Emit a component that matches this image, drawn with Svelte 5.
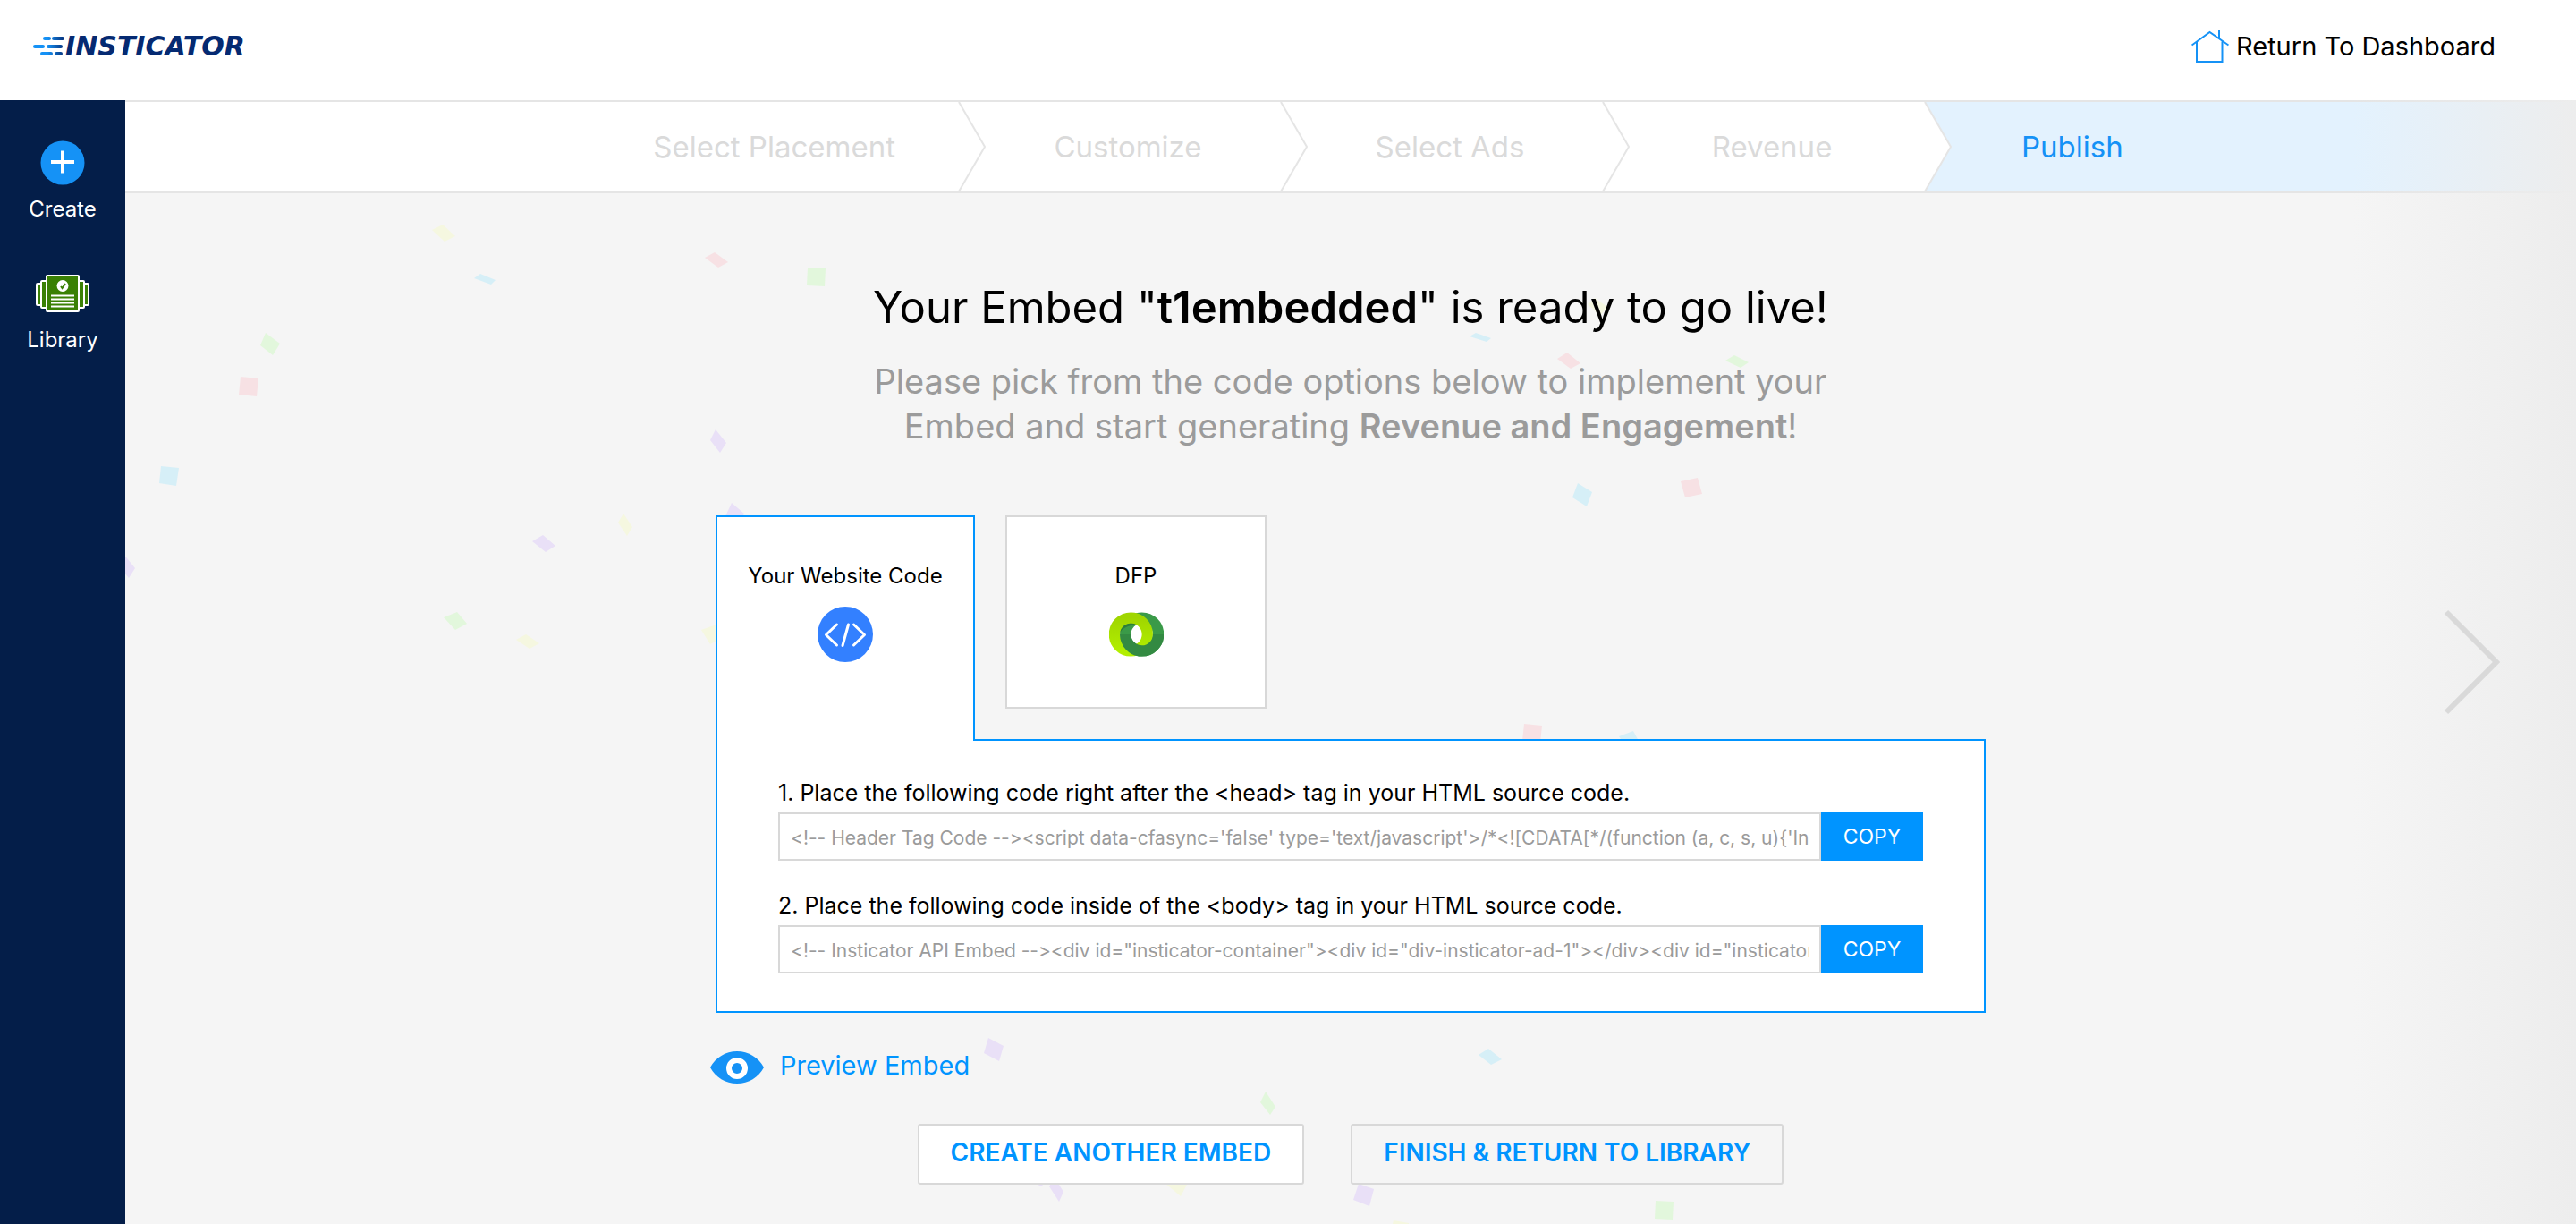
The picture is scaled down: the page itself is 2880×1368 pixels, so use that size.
<script>
  const steps = ['Select Placement', 'Customize', 'Select Ads', 'Revenue', 'Publish'];
  const current = 'Publish';

  const fields = [
    {
      id: 'head-code',
      label: '1. Place the following code right after the <head> tag in your HTML source code.',
      value: "<!-- Header Tag Code --><script data-cfasync='false' type='text/javascript'>/*<![CDATA[*/(function (a, c, s, u){'Insticator'"
    },
    {
      id: 'body-code',
      label: '2. Place the following code inside of the <body> tag in your HTML source code.',
      value: '<!-- Insticator API Embed --><div id="insticator-container"><div id="div-insticator-ad-1"></div><div id="insticator-embed">'
    }
  ];

  const colors = { y: '#f5f7e0', b: '#d6eff7', p: '#f7e1e4', g: '#e2f7dc', v: '#e9e0f7' };
  const confetti = [
    ['y', '483,257 495,251 509,264 497,270'],
    ['b', '530,311 537,306 554,313 549,318'],
    ['p', '788,288 799,282 814,293 803,299'],
    ['g', '903,299 923,300 922,320 902,319'],
    ['g', '297,372 313,384 305,397 291,386'],
    ['p', '269,421 289,423 287,443 267,441'],
    ['v', '800,480 812,495 805,506 794,492'],
    ['b', '180,521 200,523 197,543 178,540'],
    ['v', '818,562 832,574 826,588 811,577'],
    ['y', '697,574 707,589 701,599 691,584'],
    ['v', '595,605 607,598 621,610 610,617'],
    ['v', '138,619 151,635 144,646 132,632'],
    ['g', '496,690 511,684 522,697 509,704'],
    ['y', '577,715 588,709 603,719 592,725'],
    ['y', '784,704 801,698 809,712 794,720'],
    ['b', '1643,376 1650,372 1667,378 1662,382'],
    ['p', '1741,401 1752,394 1767,406 1756,412'],
    ['b', '1758,556 1764,540 1780,550 1774,566'],
    ['p', '1879,538 1898,534 1903,552 1884,556'],
    ['g', '1929,403 1939,397 1955,405 1946,411'],
    ['y', '1775,340 1783,333 1797,343 1789,353'],
    ['p', '1704,809 1724,811 1722,830 1702,828'],
    ['b', '1810,823 1826,817 1833,830 1820,838'],
    ['b', '1653,1179 1664,1172 1679,1184 1667,1190'],
    ['v', '1105,1160 1122,1169 1117,1186 1100,1177'],
    ['g', '1415,1220 1426,1237 1420,1246 1409,1232'],
    ['v', '1179,1316 1189,1332 1184,1343 1173,1326'],
    ['v', '1150,1320 1168,1318 1165,1326'],
    ['y', '1302,1322 1328,1322 1320,1337'],
    ['v', '1519,1323 1536,1329 1531,1348 1513,1341'],
    ['g', '1851,1342 1871,1343 1870,1363 1850,1362'],
    ['y', '1558,1364 1575,1367 1574,1372 1556,1372']
  ];
</script>

{#snippet codeIcon()}
  <svg width="62" height="62" viewBox="0 0 62 62" aria-hidden="true">
    <circle cx="31" cy="31" r="31" fill="#3380ff" />
    <path d="M21.500 20 9.500 31.500 21.500 43M40.500 20 52.500 31.500 40.500 43M34.500 20 28 43.500" fill="none" stroke="#fff" stroke-width="3" stroke-linecap="round" stroke-linejoin="round" />
  </svg>
{/snippet}

{#snippet dfpIcon()}
  <svg width="61" height="62" viewBox="0 0 62 62" aria-hidden="true">
    <defs>
      <linearGradient id="lime" x1="0" y1="0" x2="0" y2="1">
        <stop offset="0" stop-color="#a0d600" />
        <stop offset="1" stop-color="#b2ee00" />
      </linearGradient>
      <clipPath id="lower"><rect x="0" y="31" width="62" height="31" /></clipPath>
    </defs>
    <circle cx="37.250" cy="31" r="18.750" fill="none" stroke="#3a9a48" stroke-width="12.500" />
    <circle cx="24.750" cy="31" r="18.750" fill="none" stroke="url(#lime)" stroke-width="12.500" />
    <circle cx="37.250" cy="31" r="18.750" fill="none" stroke="#338a42" stroke-width="12.500" clip-path="url(#lower)" />
    <path d="M12.200 31A12.500 12.500 0 0 1 24.700 18.500C27 18.500 29 19 31 20C28 20 26 20 24 21C17 23 13 26 12.200 31Z" fill="#2d7d3a" />
  </svg>
{/snippet}

<div class="page">
  <header>
    <a class="logo" href="#home">
      <svg width="36" height="22" viewBox="0 0 36 22" aria-hidden="true">
        <defs>
          <linearGradient id="trail" gradientUnits="userSpaceOnUse" x1="16" y1="0" x2="36" y2="0">
            <stop offset="0" stop-color="#1592f6" />
            <stop offset="1" stop-color="#052a72" />
          </linearGradient>
        </defs>
        <g fill="url(#trail)">
          <rect x="11" y="0" width="9" height="4" rx="2" />
          <rect x="21" y="0" width="14" height="4" rx="2" />
          <rect x="0" y="9" width="13" height="4" rx="2" />
          <rect x="15" y="9" width="18" height="4" rx="2" />
          <rect x="8" y="17" width="14" height="4" rx="2" />
          <rect x="24" y="17" width="9" height="4" rx="2" />
        </g>
      </svg>
      <span>INSTICATOR</span>
    </a>
    <a class="dashboard" href="#dashboard">
      <svg width="42" height="38" viewBox="0 0 42 38" fill="none" stroke="#1592f6" stroke-width="2" aria-hidden="true">
        <path d="M0.500 17.500 20.500 3 41.500 17.500M6 13.500V36H34.500V13.500M31 1V10" />
      </svg>
      <span>Return To Dashboard</span>
    </a>
  </header>

  <div class="body">
    <nav class="sidebar" aria-label="Main">
      <a href="#create">
        <span class="glyph">
          <svg width="50" height="50" viewBox="0 0 50 50" aria-hidden="true">
            <circle cx="25" cy="25" r="24.500" fill="#1592f6" />
            <path d="M12 24H38M25 11.500V36.500" stroke="#fff" stroke-width="4" />
          </svg>
        </span>
        Create
      </a>
      <a href="#library">
        <span class="glyph">
          <svg width="60" height="44" viewBox="0 0 60 44" aria-hidden="true">
            <g fill="#3a8004" stroke="#fff" stroke-width="2" stroke-linejoin="round">
              <rect x="1" y="11" width="58" height="24" rx="1" />
              <rect x="6" y="8" width="48" height="30" rx="1" />
              <rect x="12" y="2" width="36" height="40" rx="1" />
            </g>
            <circle cx="30" cy="13.500" r="6.500" fill="#fff" />
            <path d="M28 14 29.500 16 33 11" fill="none" stroke="#3a8004" stroke-width="2" />
            <path d="M17 24.500H43M17 28.500H43M17 32.500H43M17 36.500H43" stroke="#fff" stroke-width="2" />
          </svg>
        </span>
        Library
      </a>
    </nav>

    <div class="workspace">
      <svg class="confetti" viewBox="140 112 2740 1256" preserveAspectRatio="xMidYMin slice" aria-hidden="true">
        {#each confetti as [tone, points]}
          <polygon {points} fill={colors[tone]} />
        {/each}
      </svg>

      <ol class="steps">
        {#each steps as step, i}
          <li class:current={step === current}>
            {#if i > 0}
              <svg width="32" height="100" viewBox="0 0 32 100" aria-hidden="true">
                <path d="M0 0H1L30 50 1 100H0Z" fill="#fff" />
                <path d="M1 0 30 50 1 100" fill="none" stroke="#e5e5e5" stroke-width="2" />
              </svg>
            {/if}
            <a href="#step-{i + 1}">{step}</a>
          </li>
        {/each}
      </ol>

      <main>
        <h1>Your Embed "<strong>t1embedded</strong>" is ready to go live!</h1>
        <p class="lead">
          Please pick from the code options below to implement your<br />
          Embed and start generating <strong>Revenue and Engagement</strong>!
        </p>

        <div class="tabs" role="tablist">
          <button class="tab active" role="tab" aria-selected="true">
            <span>Your Website Code</span>
            {@render codeIcon()}
          </button>
          <button class="tab" role="tab" aria-selected="false">
            <span>DFP</span>
            {@render dfpIcon()}
          </button>
        </div>

        <section class="panel">
          {#each fields as field}
            <div class="field">
              <label for={field.id}>{field.label}</label>
              <div class="row">
                <input id={field.id} type="text" readonly value={field.value} />
                <button>COPY</button>
              </div>
            </div>
          {/each}
        </section>

        <div class="preview">
          <a href="#preview">
            <svg width="60" height="36" viewBox="0 0 60 36" aria-hidden="true">
              <path d="M0 18C6 7 17 0 30 0S54 7 60 18C54 29 43 36 30 36S6 29 0 18Z" fill="#1592f6" />
              <circle cx="30" cy="19" r="9" fill="#1592f6" stroke="#fff" stroke-width="6" />
            </svg>
            <span>Preview Embed</span>
          </a>
        </div>

        <div class="actions">
          <button class="filled">CREATE ANOTHER EMBED</button>
          <button>FINISH &amp; RETURN TO LIBRARY</button>
        </div>
      </main>

      <div class="shade">
        <button aria-label="Next">
          <svg width="64" height="118" viewBox="0 0 64 118" aria-hidden="true">
            <path d="M3 3 59 59 3 115" fill="none" stroke="#d9d9d9" stroke-width="6" />
          </svg>
        </button>
      </div>
    </div>
  </div>
</div>

<style>
  :global(body) {
    margin: 0;
  }

  .page {
    display: flex;
    flex-direction: column;
    min-height: 100vh;
    font-family: Inter, 'Liberation Sans', sans-serif;
    font-size: 24px;
    line-height: 32px;
    color: #000;
    background: #f5f5f5;
  }

  .page * {
    box-sizing: border-box;
  }

  a {
    color: inherit;
    text-decoration: none;
  }

  button {
    font: inherit;
    color: inherit;
    cursor: pointer;
  }

  svg {
    display: block;
    flex: none;
  }

  header {
    display: flex;
    align-items: center;
    justify-content: space-between;
    height: 112px;
    padding: 0 90px 8px 37px;
    background: #fff;
  }

  .logo {
    display: flex;
    align-items: center;
    font-family: 'DejaVu Sans', sans-serif;
    font-size: 30px;
    font-style: italic;
    font-weight: 700;
    color: #052a72;
  }

  .dashboard {
    display: flex;
    align-items: center;
    gap: 8px;
    font-size: 28px;
  }

  .dashboard,
  .preview {
    font-size: 29px;
  }

  .body {
    display: flex;
    flex: 1;
  }

  .sidebar {
    display: flex;
    flex: none;
    flex-direction: column;
    gap: 53px;
    width: 140px;
    padding-top: 45px;
    color: #fff;
    background: #041e49;
  }

  .sidebar a {
    display: flex;
    flex-direction: column;
    align-items: center;
    gap: 11px;
  }

  .glyph {
    display: flex;
    align-items: center;
    height: 50px;
  }

  .workspace {
    position: relative;
    flex: 1;
    min-width: 0;
    overflow: hidden;
  }

  .confetti {
    position: absolute;
    inset: 0;
    width: 100%;
    height: 100%;
  }

  .steps {
    position: relative;
    display: flex;
    height: 104px;
    margin: 0;
    padding: 0;
    list-style: none;
    font-size: 33px;
    color: #dadada;
    background: #fff;
    border: solid #e5e5e5;
    border-width: 2px 0;
  }

  .steps li {
    display: flex;
    flex: none;
    align-items: center;
    width: 360px;
  }

  .steps li a {
    flex: 1;
    padding-right: 12px;
    text-align: center;
    white-space: nowrap;
  }

  .steps li:first-child {
    flex: 1 1 281px;
  }

  .steps li:first-child a {
    padding-right: 70px;
    text-align: right;
  }

  .steps li:last-child {
    flex: 1 1 79px;
  }

  .steps li:last-child a {
    padding: 0 0 0 77px;
    text-align: left;
  }

  .steps .current {
    color: #1592f6;
    background: #e3f2fe;
  }

  main {
    position: relative;
    display: flex;
    flex-direction: column;
    align-items: center;
    padding: 98px 0 44px;
  }

  h1 {
    margin: 0;
    font-size: 49px;
    font-weight: 400;
    line-height: 60px;
  }

  strong {
    font-weight: 600;
  }

  .lead {
    margin: 27px 0 75px;
    font-size: 38px;
    line-height: 50px;
    text-align: center;
    color: #9b9b9b;
  }

  .tabs {
    position: relative;
    z-index: 1;
    display: flex;
    align-items: flex-start;
    gap: 34px;
    width: 1420px;
  }

  .tab {
    display: flex;
    flex-direction: column;
    align-items: center;
    gap: 18px;
    width: 292px;
    height: 216px;
    padding: 50px 0 0;
    background: #fff;
    border: 2px solid #d8d8d8;
  }

  .tab.active {
    width: 290px;
    height: 252px;
    border-color: #0094ff;
    border-bottom: 0;
  }

  .panel {
    display: flex;
    flex-direction: column;
    gap: 34px;
    width: 1420px;
    margin-top: -2px;
    padding: 42px 68px;
    background: #fff;
    border: 2px solid #0094ff;
  }

  .field {
    display: flex;
    flex-direction: column;
    gap: 6px;
    font-size: 25px;
  }

  .row {
    display: flex;
    height: 54px;
  }

  .row input {
    flex: 1;
    min-width: 0;
    padding: 4px 12px 0;
    font: inherit;
    font-size: 21px;
    font-feature-settings: 'calt' 0;
    color: #9b9b9b;
    background: #fff;
    border: 2px solid #d8d8d8;
    border-radius: 0;
    outline: 0;
  }

  .row button {
    width: 114px;
    padding: 0;
    font-size: 23px;
    color: #fff;
    background: #0094ff;
    border: 0;
  }

  .preview {
    display: flex;
    width: 1432px;
    margin-top: 39px;
    color: #0094ff;
  }

  .preview a {
    display: flex;
    align-items: flex-end;
    gap: 18px;
    height: 40px;
  }

  .preview span {
    line-height: 40px;
  }

  .actions {
    display: flex;
    gap: 52px;
    margin-top: 45px;
  }

  .actions button {
    height: 68px;
    padding: 0 35px 4px;
    font-size: 28px;
    font-weight: 600;
    color: #0094ff;
    background: #f5f5f5;
    border: 2px solid #d8d8d8;
    border-radius: 3px;
  }

  .actions .filled {
    background: #fff;
  }

  .shade {
    position: absolute;
    inset: 0 0 0 auto;
    display: flex;
    align-items: center;
    justify-content: flex-end;
    width: 250px;
    padding-right: 84px;
    background: linear-gradient(to right, rgba(237, 237, 237, 0), #ededed);
  }

  .shade button {
    padding: 0;
    background: none;
    border: 0;
  }
</style>
